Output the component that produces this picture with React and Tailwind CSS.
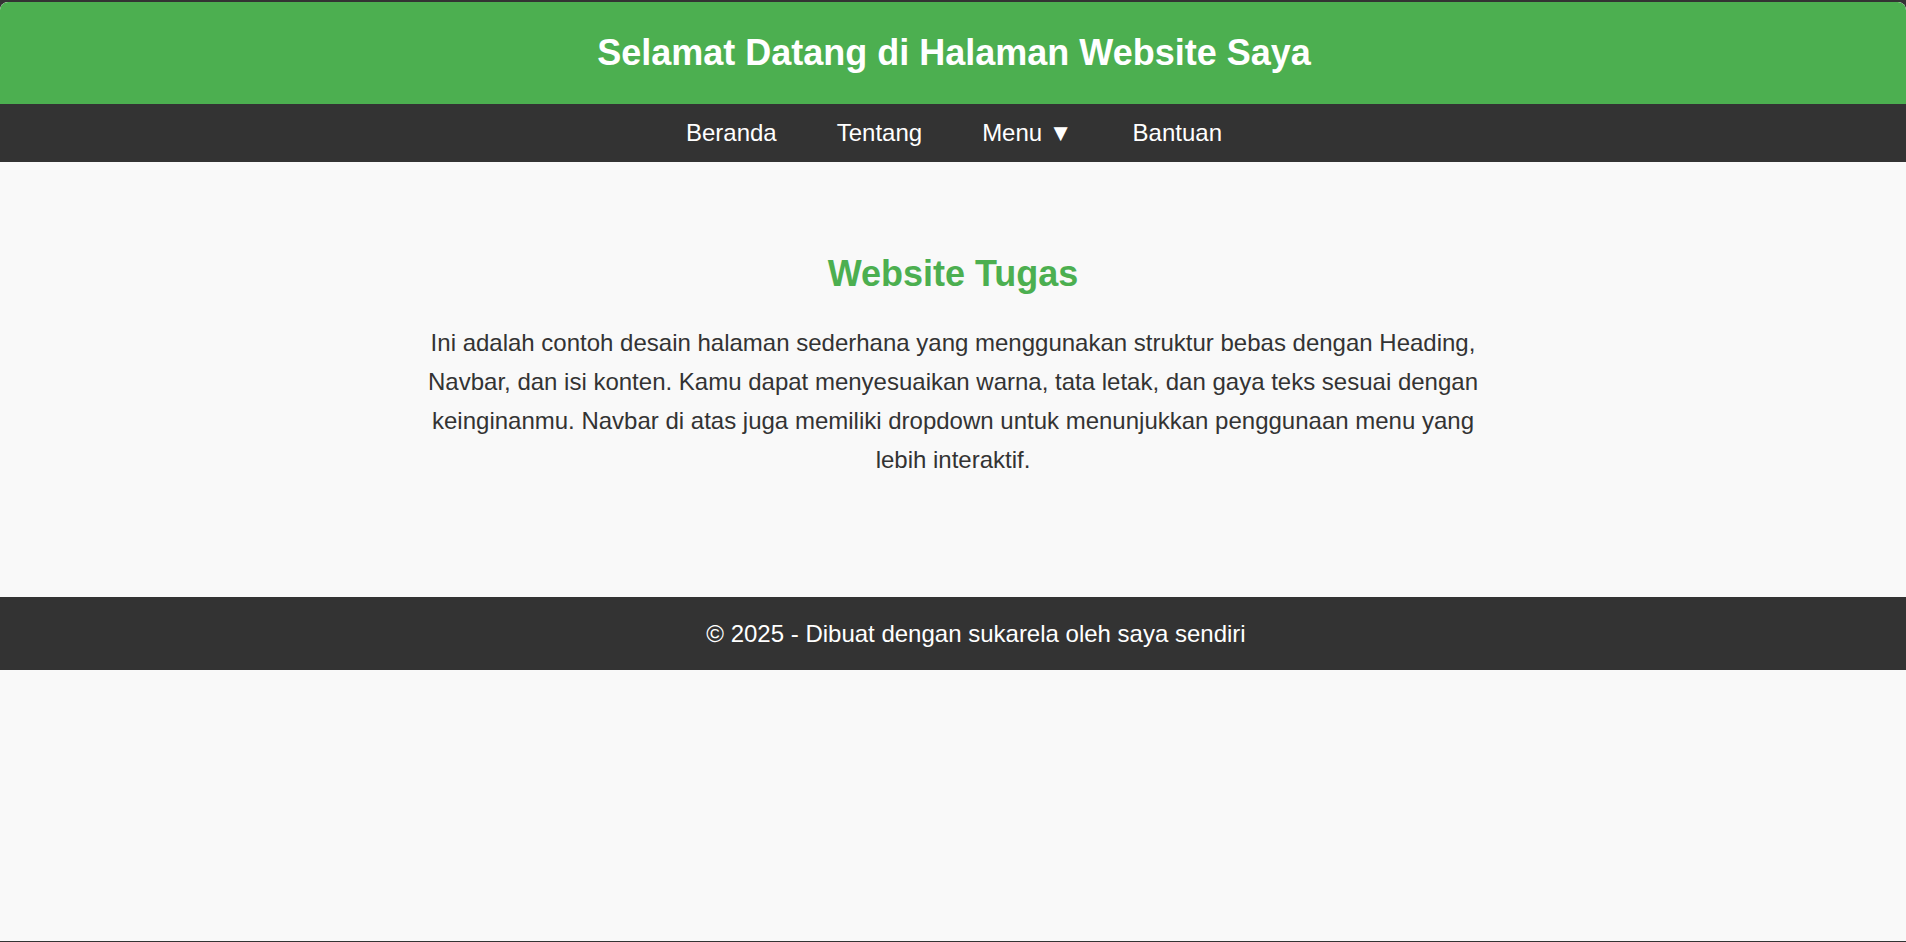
import React from 'react';

const navItems = ['Beranda', 'Tentang', 'Menu ▼', 'Bantuan'];

const App = () => {
  return (
    <div className="h-[942px] bg-[#333] pt-[2px] pb-px font-['Liberation_Sans',Arial,sans-serif]">
      <div className="h-full bg-[#f9f9f9] rounded-t-lg overflow-hidden">
        <header className="h-[102px] bg-[#4caf50] rounded-t-lg flex items-center justify-center pl-[2px]">
          <h1 className="text-[36px] font-bold text-white leading-none">Selamat Datang di Halaman Website Saya</h1>
        </header>

        <nav className="h-[58px] bg-[#333] flex items-center justify-center gap-[60px] pl-[2px]">
          {navItems.map(item => (
            <a key={item} href="#" className="text-[24px] text-white leading-none">{item}</a>
          ))}
        </nav>

        <main className="h-[435px] pt-[91px]">
          <div className="max-w-[1080px] mx-auto text-center">
            <h2 className="text-[36px] font-bold text-[#4caf50] leading-[42px]">Website Tugas</h2>
            <p className="mt-[29px] text-[24px] leading-[38.9px] text-[#333]">
              Ini adalah contoh desain halaman sederhana yang menggunakan struktur bebas dengan Heading, Navbar, dan isi konten. Kamu dapat menyesuaikan warna, tata letak, dan gaya teks sesuai dengan keinginanmu. Navbar di atas juga memiliki dropdown untuk menunjukkan penggunaan menu yang lebih interaktif.
            </p>
          </div>
        </main>

        <footer className="h-[73px] bg-[#333] flex items-center justify-center pl-[46px]">
          <p className="text-[24px] text-white">© 2025 - Dibuat dengan sukarela oleh saya sendiri</p>
        </footer>
      </div>
    </div>
  );
};

export default App;
